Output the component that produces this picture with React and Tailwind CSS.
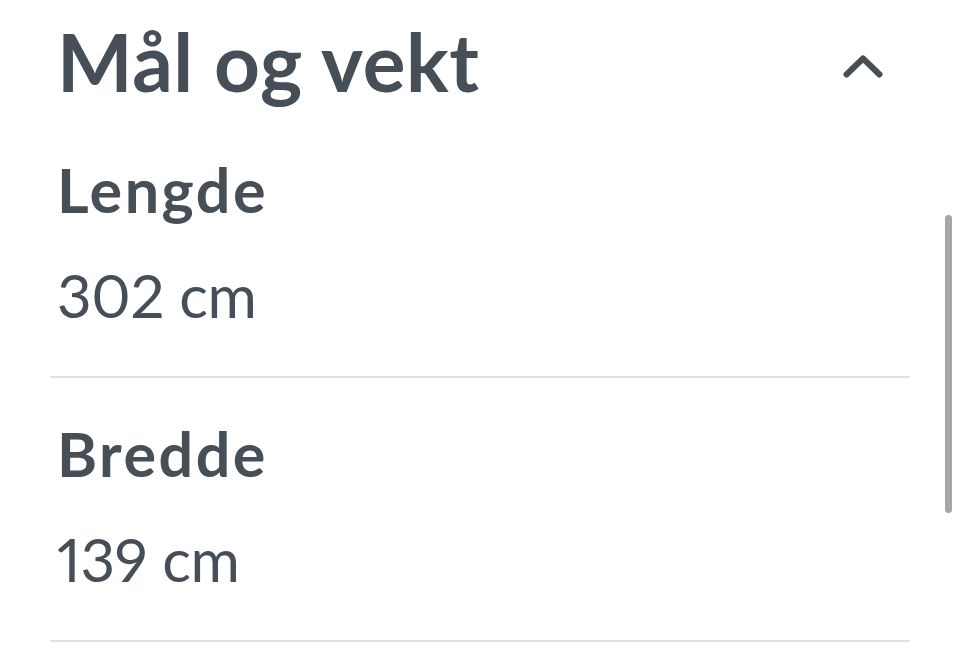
export default function App() {
  const rows = [
    { label: 'Lengde', value: '302 cm' },
    { label: 'Bredde', value: '139 cm' },
  ]

  return (
    <div className="relative h-[658px] w-[960px] overflow-hidden bg-white text-[#464f57]" style={{ fontFamily: 'Lato, "Noto Sans", sans-serif' }}>
      <main className="px-[50px]">
        <header className="flex items-start justify-between pt-[13px]">
          <h1 className="pl-[7px] text-[80px] font-bold leading-[96px] tracking-[0.6px]">Mål og vekt</h1>
          <svg width="44" height="28" viewBox="0 0 44 28" className="mr-[25px] mt-[39px]" fill="none" stroke="#464f57" strokeWidth="6" strokeLinecap="round" strokeLinejoin="round">
            <polyline points="5.5,22.5 22,6.5 38.5,22.5" />
          </svg>
        </header>

        <section className="mt-[45px]">
          {rows.map((row, index) => (
            <div key={row.label} className={`border-b-2 border-[#e0e0e0] pb-[45px] ${index > 0 ? 'pt-[40px]' : ''}`}>
              <h2 className="pl-[7px] text-[61px] font-bold leading-[72px] tracking-[2.5px]">{row.label}</h2>
              <p className="mt-[33px] pl-[7px] text-[60px] leading-[72px] tracking-[-0.3px] proportional-nums">{row.value}</p>
            </div>
          ))}
        </section>
      </main>

      <div className="absolute left-[945px] top-[215px] h-[298px] w-[7px] rounded-full bg-[#a6a6a6]" />
    </div>
  )
}
